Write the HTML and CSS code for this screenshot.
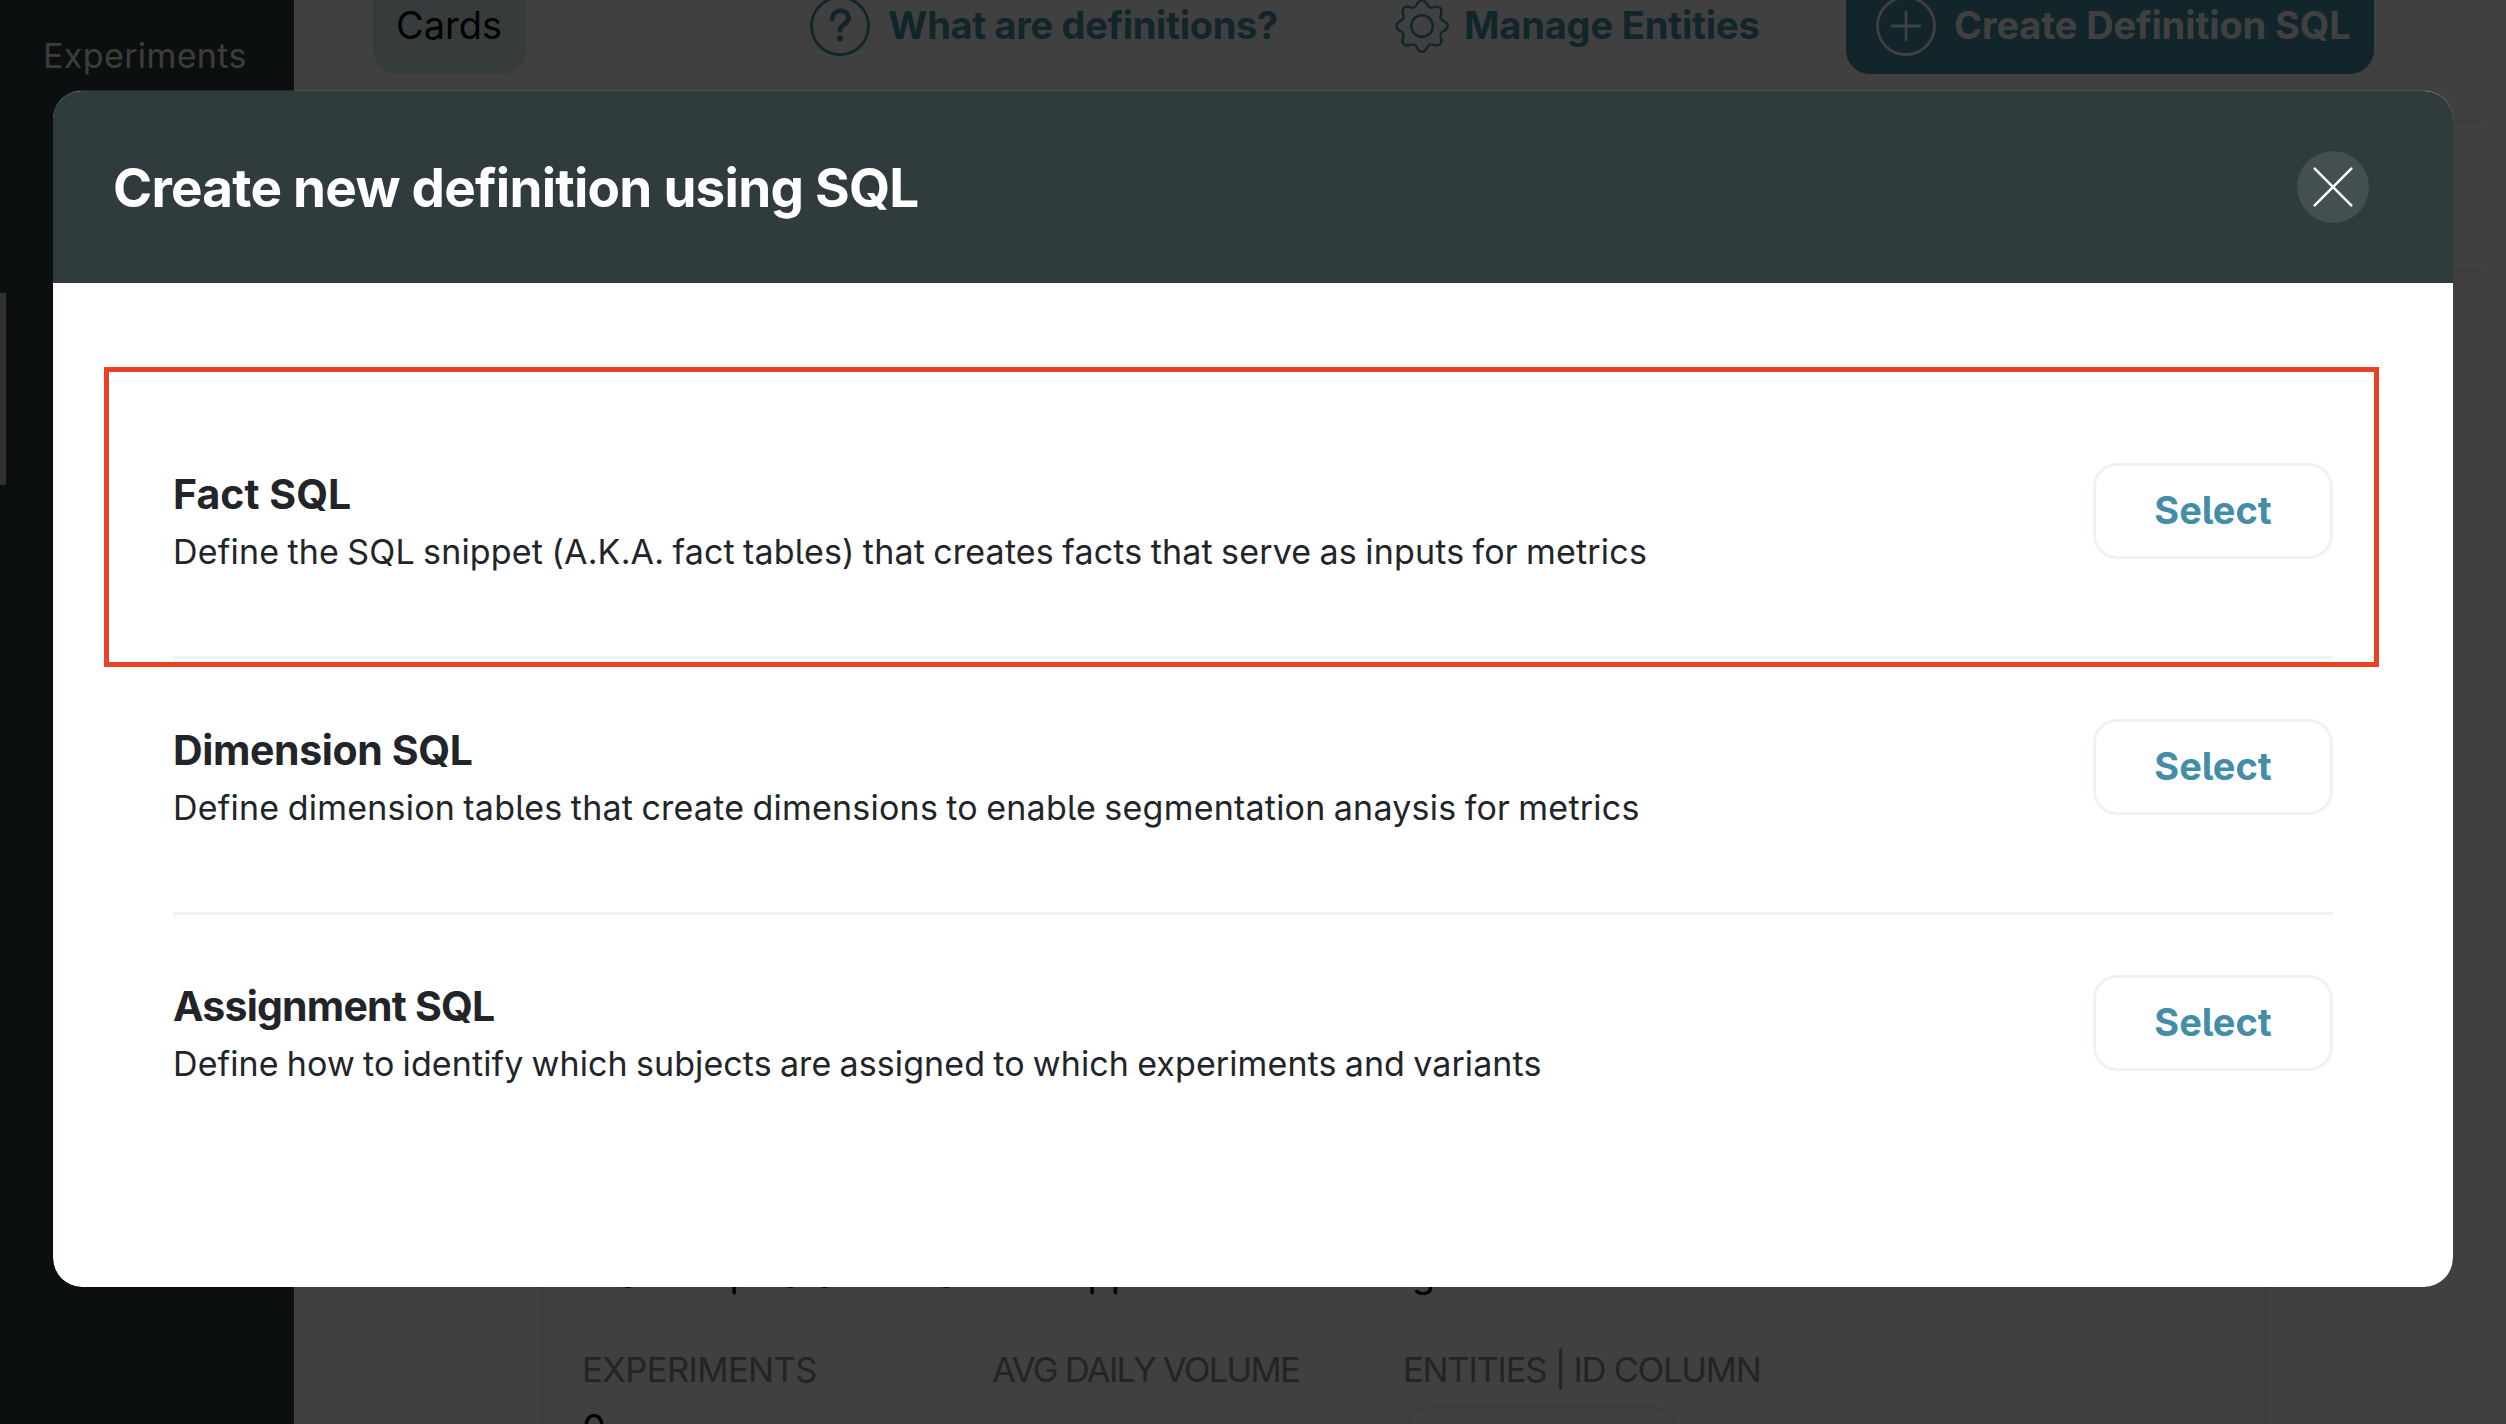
FILE: index.html
```html
<!DOCTYPE html>
<html lang="en">
<head>
<meta charset="utf-8">
<title>Create new definition using SQL</title>
<link rel="stylesheet" href="styles.css">
</head>
<body>
<div class="app">
  <nav class="sidebar">
    <a class="nav-item">Experiments</a>
    <div class="nav-marker"></div>
  </nav>
  <main class="main">
    <div class="toolbar">
      <div class="tab">Cards</div>
      <div class="action">
        <svg width="60" height="60" viewBox="-30 -30 60 60" fill="none" stroke="currentColor" stroke-linecap="round">
          <circle r="28.5" stroke-width="2.8"/>
          <path d="M-7.6-7.2C-7-18 8.6-17.6 8.4-7.6C8.2-1.6 0-2 0 4.6" stroke-width="5"/>
          <circle cy="12.6" r="3" fill="currentColor" stroke="none"/>
        </svg>
        <span class="help-label">What are definitions?</span>
      </div>
      <div class="action">
        <svg width="54" height="54" viewBox="-27.5 -27.5 55 55" fill="none" stroke="currentColor" stroke-width="2.5">
          <defs><path id="tooth" d="M-7.85-18.95C-4.6-20.3-5-26.2 0-26.2S4.6-20.3 7.85-18.95"/></defs>
          <use href="#tooth"/>
          <use href="#tooth" transform="rotate(45)"/>
          <use href="#tooth" transform="rotate(90)"/>
          <use href="#tooth" transform="rotate(135)"/>
          <use href="#tooth" transform="rotate(180)"/>
          <use href="#tooth" transform="rotate(225)"/>
          <use href="#tooth" transform="rotate(270)"/>
          <use href="#tooth" transform="rotate(315)"/>
          <circle r="11"/>
        </svg>
        <span class="manage-label">Manage Entities</span>
      </div>
      <div class="action primary">
        <svg width="60" height="60" viewBox="-30 -30 60 60" fill="none" stroke="currentColor" stroke-width="2.8" stroke-linecap="round">
          <circle r="28.5"/>
          <path d="M-14 0H14M0-14V14"/>
        </svg>
        <span class="create-label">Create Definition SQL</span>
      </div>
    </div>
    <div class="filters"></div>
    <section class="card">
      <div class="card-name"><span class="name-a">Made up</span><span class="name-b">dataset that is</span><span class="name-c">supposed to be</span><span class="name-d">design</span></div>
      <div class="card-grid">
        <div class="col"><div class="label l1">EXPERIMENTS</div><div class="value">0</div></div>
        <div class="col"><div class="label l2">AVG DAILY VOLUME</div></div>
        <div class="col"><div class="label l3">ENTITIES | ID COLUMN</div><div class="chip"></div></div>
      </div>
    </section>
  </main>
</div>

<div class="overlay">
  <div class="modal" role="dialog">
    <header class="modal-header">
      <h1 class="modal-title">Create new definition using SQL</h1>
      <button class="close" aria-label="Close">
        <svg width="40" height="40" viewBox="-20 -20 40 40" stroke="#fff" stroke-width="2.5" stroke-linecap="round"><path d="M-18.3-18.3L18.3 18.3M18.3-18.3L-18.3 18.3"/></svg>
      </button>
    </header>
    <div class="modal-body">
      <div class="option">
        <div class="option-text">
          <h2 class="option-title t1">Fact SQL</h2>
          <p class="option-desc d1">Define the SQL snippet (A.K.A. fact tables) that creates facts that serve as inputs for metrics</p>
        </div>
        <button class="select">Select</button>
      </div>
      <div class="option">
        <div class="option-text">
          <h2 class="option-title t2">Dimension SQL</h2>
          <p class="option-desc d2">Define dimension tables that create dimensions to enable segmentation anaysis for metrics</p>
        </div>
        <button class="select">Select</button>
      </div>
      <div class="option">
        <div class="option-text">
          <h2 class="option-title t3">Assignment SQL</h2>
          <p class="option-desc d3">Define how to identify which subjects are assigned to which experiments and variants</p>
        </div>
        <button class="select">Select</button>
      </div>
    </div>
    <div class="highlight"></div>
  </div>
</div>
</body>
</html>
```
FILE: styles.css
```css
* { box-sizing: border-box; margin: 0; padding: 0; }

body {
  width: 2506px;
  height: 1424px;
  overflow: hidden;
  background: #fff;
  color: #212529;
  font-family: Inter, "Liberation Sans", sans-serif;
  font-feature-settings: "cv05";
  white-space: nowrap;
}

button { font: inherit; font-feature-settings: inherit; background: none; border: 0; }
svg { display: block; flex: none; }

/* page behind the dialog */
.app { display: flex; height: 1424px; overflow: hidden; }

.sidebar {
  flex: none;
  width: 294px;
  padding-top: 35px;
  background: #2c3c40;
}
.nav-item {
  display: block;
  padding-left: 43px;
  font-size: 34px;
  line-height: 42px;
  letter-spacing: 0.38px;
  color: #f0f0f0;
}
.nav-marker { width: 6px; height: 192px; margin-top: 216px; background: #c0c0c0; }

.main { flex: 1; min-width: 0; }

.toolbar {
  display: grid;
  grid-template-columns: 437px 585px 451px 528px;
  height: 96px;
  margin-top: -22px;
  padding-left: 79px;
}
.tab {
  width: 153px;
  padding-left: 23px;
  border-radius: 24px;
  background: #d8ecf0;
  color: #000;
  font-size: 38px;
  line-height: 94px;
}
.action {
  display: flex;
  align-items: center;
  color: #4592ac;
  font-size: 38px;
  font-weight: 700;
}
.action span { padding-bottom: 2px; }
.help-label { margin-left: 18px; letter-spacing: -0.3px; }
.manage-label { margin-left: 15px; letter-spacing: -0.16px; }
.create-label { margin-left: 18px; letter-spacing: -0.1px; }
.primary { padding-left: 30px; border-radius: 24px; background: #4592ac; color: #fff; }

.filters {
  height: 153px;
  margin: 45px 24px 0 79px;
  border-top: 3px solid #eef1f5;
  border-bottom: 3px solid #eef1f5;
}

.card {
  width: 1726px;
  height: 600px;
  margin: 828px 0 0 247px;
  padding: 140px 0 0 38px;
  border: 3px solid #eef1f5;
  border-radius: 24px;
}
.card-name { display: flex; height: 60px; font-size: 38px; line-height: 60px; color: #000; }
.name-a { width: 176px; letter-spacing: 2.2px; }
.name-b { width: 287px; }
.name-c { width: 292px; }
.card-grid { display: grid; grid-template-columns: 410px 411px 411px; margin-top: 42px; }
.label { font-size: 34.5px; line-height: 50px; color: #868f98; }
.l1 { letter-spacing: -0.54px; }
.l2 { letter-spacing: -1.68px; }
.l3 { letter-spacing: -1.19px; }
.value { font-size: 38px; line-height: 60px; margin-top: 3px; color: #000; }
.chip { width: 272px; height: 60px; margin: 11px 0 0 2px; border: 3px solid #eef1f5; border-radius: 24px; }

/* dialog */
.overlay {
  position: absolute;
  inset: 0;
  display: flex;
  justify-content: center;
  align-items: flex-start;
  padding-top: 90px;
  background: rgba(0, 0, 0, 0.75);
}
.modal {
  position: relative;
  width: 2400px;
  height: 1197px;
  overflow: hidden;
  border-top: 1px solid rgba(255, 255, 255, 0.1);
  border-radius: 29px;
  background: #fff;
  background-clip: padding-box;
}
.modal-header {
  display: flex;
  justify-content: space-between;
  align-items: center;
  height: 192px;
  padding: 0 84px 0 60px;
  background: #2f3b3d;
  color: #fff;
}
.modal-title { padding-top: 2px; font-size: 53px; font-weight: 700; line-height: 64px; letter-spacing: -0.75px; }
.close {
  display: flex;
  align-items: center;
  justify-content: center;
  width: 72px;
  height: 72px;
  border-radius: 50%;
  background: #434f51;
}

.modal-body { padding: 120px 120px 0; }
.option {
  display: flex;
  justify-content: space-between;
  align-items: flex-start;
  height: 256px;
  padding-top: 60px;
  border-bottom: 3px solid #eef1f5;
}
.option:last-child { border-bottom: 0; }
.option-title { font-size: 41px; font-weight: 700; line-height: 60px; margin-top: 1px; }
.option-desc { font-size: 34px; line-height: 54px; margin-top: 1px; word-spacing: -1.5px; }
.t1 { letter-spacing: 0.05px; }
.t2 { letter-spacing: -0.38px; }
.t3 { letter-spacing: -0.8px; }
.d1 { letter-spacing: 0.18px; }
.d2 { letter-spacing: 0.22px; }
.d3 { letter-spacing: 0.1px; }
.select {
  width: 240px;
  height: 96px;
  padding-bottom: 2px;
  border: 3px solid #eef1f5;
  border-radius: 24px;
  color: #438da9;
  font-size: 38px;
  font-weight: 700;
}

/* outline around the first option */
.highlight {
  position: absolute;
  left: 51px;
  top: 276px;
  width: 2275px;
  height: 300px;
  border: 5px solid #ec4026;
}
```
